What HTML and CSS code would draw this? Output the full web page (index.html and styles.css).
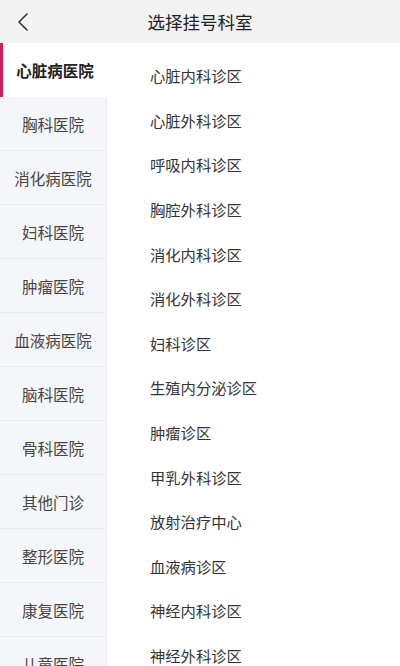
FILE: index.html
```html
<!DOCTYPE html>
<html lang="zh-CN">
<head>
<meta charset="UTF-8">
<meta name="viewport" content="width=device-width, initial-scale=1.0">
<title>选择挂号科室</title>
<link rel="stylesheet" href="styles.css">
</head>
<body>
<div class="page">
  <header class="topbar">
    <span class="back">
      <svg width="14" height="20" viewBox="0 0 14 20"><path d="M11 2 L3 10 L11 18" fill="none" stroke="#333" stroke-width="1.6" stroke-linecap="round" stroke-linejoin="round"/></svg>
    </span>
    <h1>选择挂号科室</h1>
  </header>
  <div class="body">
    <ul class="hospitals">
      <li class="active">心脏病医院</li>
      <li>胸科医院</li>
      <li>消化病医院</li>
      <li>妇科医院</li>
      <li>肿瘤医院</li>
      <li>血液病医院</li>
      <li>脑科医院</li>
      <li>骨科医院</li>
      <li>其他门诊</li>
      <li>整形医院</li>
      <li>康复医院</li>
      <li>儿童医院</li>
    </ul>
    <ul class="depts">
      <li>心脏内科诊区</li>
      <li>心脏外科诊区</li>
      <li>呼吸内科诊区</li>
      <li>胸腔外科诊区</li>
      <li>消化内科诊区</li>
      <li>消化外科诊区</li>
      <li>妇科诊区</li>
      <li>生殖内分泌诊区</li>
      <li>肿瘤诊区</li>
      <li>甲乳外科诊区</li>
      <li>放射治疗中心</li>
      <li>血液病诊区</li>
      <li>神经内科诊区</li>
      <li>神经外科诊区</li>
    </ul>
  </div>
</div>
</body>
</html>
```
FILE: styles.css
```css
* { box-sizing: border-box; }
body {
  margin: 0;
  background: #fff;
  font-family: "Noto Sans CJK SC", "Noto Sans", sans-serif;
  color: #333;
}
.page {
  width: 400px;
  height: 666px;
  overflow: hidden;
  display: flex;
  flex-direction: column;
}
.topbar {
  height: 43px;
  flex: none;
  background: #f2f2f2;
  display: flex;
  align-items: center;
  justify-content: center;
  position: relative;
}
.topbar h1 {
  margin: 0;
  font-size: 17.5px;
  font-weight: 400;
  color: #222;
}
.back {
  position: absolute;
  left: 16px;
  top: 12px;
  display: flex;
}
.body {
  display: flex;
  flex: 1;
  min-height: 0;
}
.hospitals {
  list-style: none;
  margin: 0;
  padding: 0;
  width: 107px;
  flex: none;
}
.hospitals li {
  height: 54px;
  display: flex;
  align-items: center;
  justify-content: center;
  font-size: 15.5px;
  color: #444;
  background: #f5f6f9;
  border-bottom: 1px solid #e8eaee;
  border-right: 1px solid #e8eaee;
}
.hospitals li.active {
  background: #fff;
  color: #222;
  font-weight: 700;
  border-left: 3px solid #c8245a;
  border-right: none;
  border-bottom: none;
}
.depts {
  list-style: none;
  margin: 0;
  padding: 10px 0 0 43px;
  flex: 1;
}
.depts li {
  height: 44.6px;
  display: flex;
  align-items: center;
  font-size: 15.3px;
  color: #333;
}
```
